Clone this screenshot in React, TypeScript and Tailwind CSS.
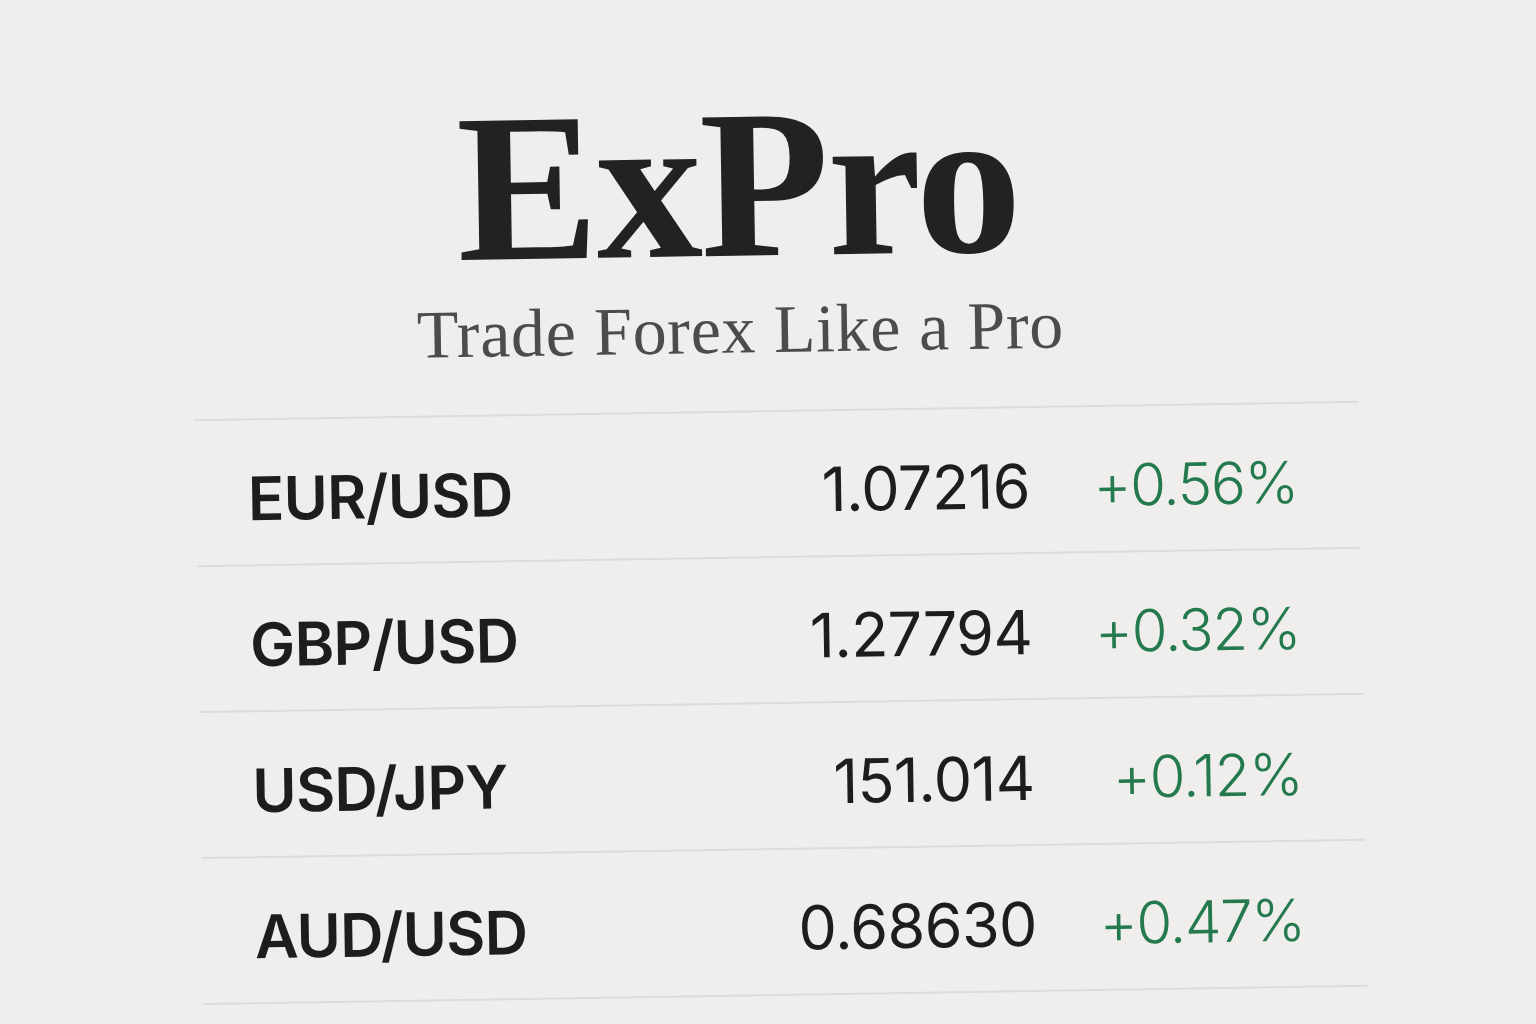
import React from "react";

const rates = [
  { pair: "EUR/USD", price: "1.07216", change: "+0.56%" },
  { pair: "GBP/USD", price: "1.27794", change: "+0.32%" },
  { pair: "USD/JPY", price: "151.014", change: "+0.12%" },
  { pair: "AUD/USD", price: "0.68630", change: "+0.47%" },
];

export default function App() {
  return (
    <div className="min-h-screen w-full overflow-hidden bg-[#efeeec]">
      <div className="ml-[196px] w-[1164px] pt-[84px] rotate-[-0.9deg]">
        {/* Brand header */}
        <header className="flex flex-col items-center pr-[70px]">
          <h1 className="font-['Liberation_Serif',serif] text-[212px] font-bold leading-[200px] tracking-[-0.01em] text-[#222222]">
            ExPro
          </h1>
          <p className="mt-[11px] font-['Liberation_Serif',serif] text-[68px] leading-none tracking-[0.01em] text-[#4b4c4c]">
            Trade Forex Like a Pro
          </p>
        </header>

        {/* Rates table */}
        <div className="mt-[47px] border-t-2 border-[#dddcda] font-['Inter',sans-serif]">
          {rates.map((r) => (
            <div
              key={r.pair}
              className="flex h-[146px] items-center border-b-2 border-[#dddcda] pt-[12px]"
            >
              <div className="flex-1 pl-[52px] text-[60px] font-semibold leading-none tracking-[-0.01em] text-[#1d1d1d]">
                {r.pair}
              </div>
              <div className="text-right text-[61px] font-normal leading-none tracking-[-0.01em] text-[#1d1d1d]">
                {r.price}
              </div>
              <div className="w-[330px] pr-[62px] text-right text-[58px] font-light leading-none tracking-[-0.02em] text-[#247a4e]">
                {r.change}
              </div>
            </div>
          ))}
        </div>
      </div>
    </div>
  );
}
